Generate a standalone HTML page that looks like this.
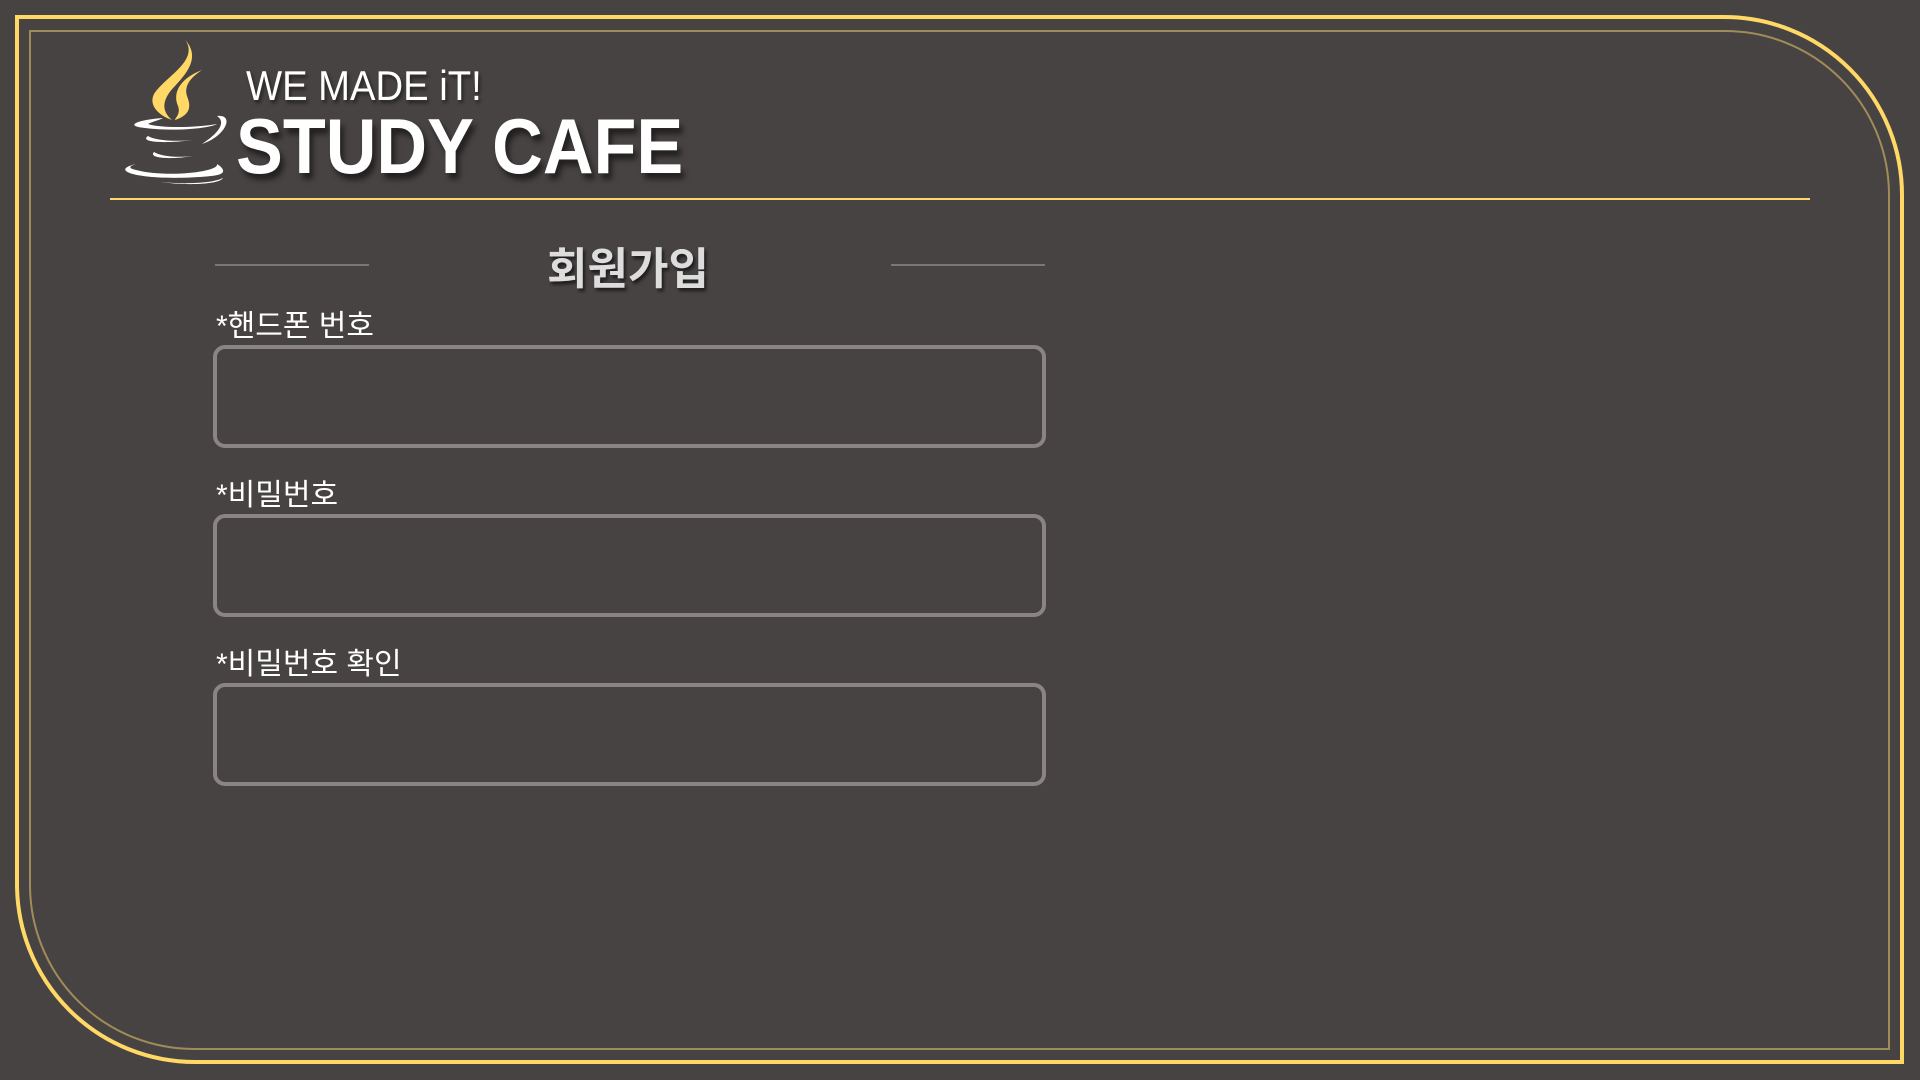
<!DOCTYPE html>
<html><head><meta charset="utf-8"><style>
html,body{margin:0;padding:0;}
body{width:1920px;height:1080px;background:#484343;position:relative;overflow:hidden;font-family:"Liberation Sans","Noto Sans CJK KR",sans-serif;}
.outer{position:absolute;left:15px;top:15px;width:1881px;height:1041px;border:4px solid #ffd866;border-radius:0 180px 0 180px;box-sizing:content-box;}
.inner{position:absolute;left:29px;top:30px;width:1857px;height:1016px;border:2px solid #a08c58;border-radius:0 165px 0 165px;}
.hline{position:absolute;left:110px;top:198px;width:1700px;height:2px;background:#ffd866;}
.we{position:absolute;left:246px;top:62px;color:#fff;font-size:42px;transform:scaleX(0.91);transform-origin:left top;text-shadow:2px 3px 4px rgba(0,0,0,.5);}
.sc{position:absolute;left:236px;top:107px;color:#fff;font-size:78px;font-weight:bold;transform:scaleX(0.9);transform-origin:left top;text-shadow:4px 6px 6px rgba(0,0,0,.55);line-height:1;}
.title{position:absolute;left:0;width:1256px;text-align:center;top:244px;font-size:44px;font-weight:bold;color:#ddd;text-shadow:2px 3px 3px rgba(0,0,0,.6);line-height:1.2;}
.sl{position:absolute;top:264px;width:154px;height:2px;background:#777;}
.lab{position:absolute;left:216px;color:#fff;font-size:30px;line-height:1;}
.inp{position:absolute;left:213px;width:833px;height:103px;border:4px solid #8a8484;border-radius:12px;box-sizing:border-box;}
</style></head><body>
<div class="outer"></div>
<div class="inner"></div>
<svg style="position:absolute;left:106px;top:36px" width="225" height="150" viewBox="0 0 150 150" preserveAspectRatio="none">
<path d="M53 4 C62 25 40 40 32 58 C28 70 36 80 44 84 C36 74 38 62 46 50 C56 34 62 20 53 4Z" fill="#ffd866"/>
<path d="M64 34 C50 42 44 56 48 70 C50 78 46 82 46 84 C58 78 56 68 54 60 C52 50 56 42 64 34Z" fill="#ffd866"/>
<path d="M38 82 C20 84 12 90 26 92 C46 96 70 92 74 88 C58 92 36 92 28 88 C30 86 36 84 38 82Z" fill="#fff"/>
<path d="M74 80 C86 78 80 100 64 108 C76 96 80 86 74 80Z" fill="#fff"/>
<path d="M28 100 C22 106 38 108 58 104 C44 106 32 104 28 100Z" fill="#fff"/>
<path d="M32 116 C28 122 42 124 58 120 C46 122 36 120 32 116Z" fill="#fff"/>
<path d="M20 128 C-2 136 30 146 70 140 C84 138 76 130 74 128 C76 136 40 142 20 134 C14 132 16 130 20 128Z" fill="#fff"/>
<path d="M36 146 C56 150 76 148 78 142 C70 148 50 148 36 146Z" fill="#fff"/>
</svg>
<div class="we">WE MADE iT!</div>
<div class="sc">STUDY CAFE</div>
<div class="hline"></div>
<div class="sl" style="left:215px"></div>
<div class="sl" style="left:891px"></div>
<div class="title">회원가입</div>
<div class="lab" style="top:312px">*핸드폰 번호</div>
<div class="inp" style="top:345px"></div>
<div class="lab" style="top:481px">*비밀번호</div>
<div class="inp" style="top:514px"></div>
<div class="lab" style="top:650px">*비밀번호 확인</div>
<div class="inp" style="top:683px"></div>
</body></html>
